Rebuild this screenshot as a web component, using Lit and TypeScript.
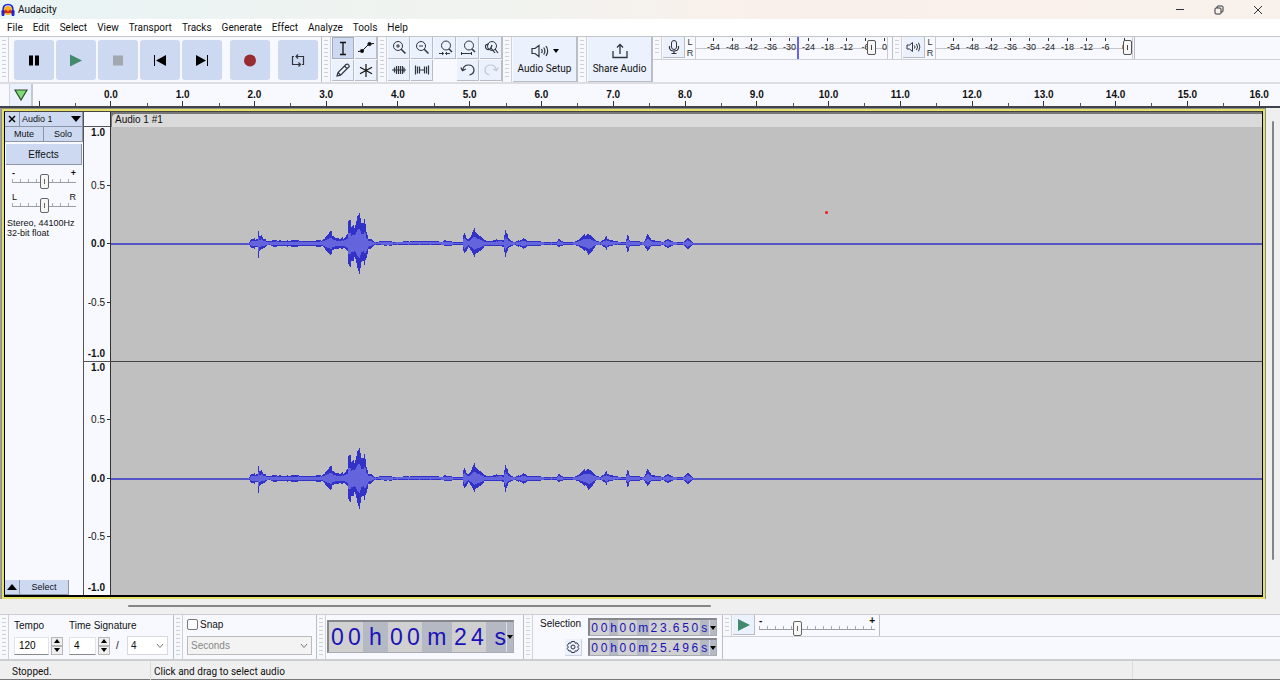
import { LitElement, html, svg, css } from "lit";
import { customElement } from "lit/decorators.js";

/* Peak envelope of the recording: [position, peak above, peak below]. */
const ENVELOPE: [number, number, number][] = [
  [137, 0, 0], [138, 1, 1], [140, 4, 4], [144, 4, 4], [146, 5, 4], [147, 13, 16], [148, 7, 7],
  [150, 8, 5], [152, 4, 4], [155, 3, 2], [158, 2, 1], [163, 3, 3], [168, 3, 2], [174, 2, 2],
  [180, 3, 3], [188, 3, 2], [196, 2, 2], [203, 2, 2], [206, 3, 3], [210, 3, 2], [213, 5, 5],
  [216, 8, 8], [219, 11, 10], [222, 8, 7], [225, 5, 5], [229, 4, 4], [233, 6, 5], [236, 10, 8],
  [237, 23, 21], [239, 22, 22], [240, 15, 16], [242, 16, 15], [244, 22, 18], [246, 30, 27],
  [248, 31, 31], [250, 19, 17], [252, 18, 15], [254, 24, 21], [255, 13, 17], [257, 5, 6],
  [260, 4, 4], [263, 1, 1], [266, 1, 1], [268, 2, 1], [280, 2, 2], [282, 1, 1], [300, 2, 1],
  [324, 2, 1], [330, 1, 1], [333, 3, 2], [338, 2, 2], [342, 1, 1], [351, 1, 1], [353, 13, 12],
  [355, 6, 8], [357, 4, 3], [359, 6, 6], [361, 10, 8], [364, 14, 13], [366, 10, 10], [370, 6, 6],
  [373, 3, 2], [380, 2, 2], [388, 4, 2], [392, 3, 3], [394, 12, 12], [395, 9, 8], [397, 6, 5],
  [400, 2, 2], [404, 1, 1], [408, 3, 3], [412, 5, 5], [416, 2, 2], [424, 2, 2], [434, 1, 1],
  [445, 1, 1], [447, 4, 3], [452, 1, 1], [462, 1, 1], [468, 4, 3], [473, 8, 6], [475, 10, 9],
  [477, 10, 12], [480, 7, 8], [484, 3, 2], [489, 1, 1], [493, 4, 3], [495, 6, 5], [499, 3, 2],
  [504, 2, 1], [511, 1, 1], [514, 1, 1], [516, 7, 7], [519, 3, 3], [524, 2, 2], [530, 1, 1],
  [533, 2, 2], [536, 9, 7], [539, 4, 3], [546, 2, 2], [551, 1, 1], [556, 4, 4], [560, 2, 2],
  [566, 1, 1], [572, 1, 1], [576, 6, 6], [579, 3, 3], [582, 0, 0],
];

const WIDTH = 1151;
const MIDDLE = 116;

function wavePath(scale: number, roughness: number): string {
  const top: string[] = [];
  const bottom: string[] = [];
  let seg = 0;
  for (let x = ENVELOPE[0][0]; x < ENVELOPE[ENVELOPE.length - 1][0]; x++) {
    while (seg < ENVELOPE.length - 2 && ENVELOPE[seg + 1][0] <= x) seg++;
    const [x0, a0, b0] = ENVELOPE[seg];
    const [x1, a1, b1] = ENVELOPE[seg + 1];
    const t = (x - x0) / (x1 - x0);
    const jitter = 1 - roughness * ((x * 7919) % 11) / 11;
    const up = Math.round((a0 + (a1 - a0) * t) * scale * jitter);
    const down = Math.round((b0 + (b1 - b0) * t) * scale * jitter);
    top.push(`L${x} ${MIDDLE - up}H${x + 1}`);
    bottom.unshift(`L${x + 1} ${MIDDLE + 1 + down}H${x}`);
  }
  return `M${ENVELOPE[0][0]} ${MIDDLE}${top.join("")}${bottom.join("")}Z`;
}

const PEAK = wavePath(1.15, 0.35);
const RMS = wavePath(0.5, 0.2);

const icon = (w: number, h: number, body: unknown) =>
  html`<svg width=${w} height=${h} viewBox="0 0 ${w} ${h}" fill="none" stroke="#30343c" aria-hidden="true">${body}</svg>`;

const lens = svg`<circle cx="7" cy="6" r="4.5"/><path d="M10.2 9.2L14.5 13.5" stroke-width="1.5"/>`;

const ICONS = {
  pause: icon(40, 40, svg`<path d="M15 15.5h4v10h-4zM21 15.5h4v10h-4z" fill="#000" stroke="none"/>`),
  play: icon(40, 40, svg`<path d="M14 14.5L26 20.5L14 26.5Z" fill="#438a6c" stroke="none"/>`),
  stop: icon(40, 40, svg`<path d="M15 15.5h10v10h-10z" fill="#a3a7b0" stroke="none"/>`),
  start: icon(40, 40, svg`<path d="M14.5 15v11" stroke="#000"/><path d="M26 15V26L16 20.5Z" fill="#000" stroke="none"/>`),
  end: icon(40, 40, svg`<path d="M25.5 15v11" stroke="#000"/><path d="M14 15V26L24 20.5Z" fill="#000" stroke="none"/>`),
  record: icon(40, 40, svg`<circle cx="20" cy="20.5" r="6" fill="#982c30" stroke="none"/>`),
  loop: icon(40, 40, svg`<path d="M16 16.5H14.5V24.5H22.5M20.500 22.500L22.500 24.500L20.500 26.500M24 24.500H25.500V16.500H18M20 14.500L18 16.500L20 18.500" stroke-width="1.200"/>`),
  ibeam: icon(22, 21, svg`<path d="M8 4.5H14M11 4.5V16.5M8 16.5H14" stroke-width="1.3" stroke="#111"/>`),
  envelope: icon(22, 21, svg`<path d="M3 14.5L7 14L14 7L19 6.5" stroke="#111"/><circle cx="7" cy="14" r="1.7" fill="#000"/><circle cx="14.5" cy="7" r="1.7" fill="#000"/>`),
  pencil: icon(22, 21, svg`<path d="M5 16L6 12.5L14 4.5Q15.5 3.5 16.7 5T16.5 7.3L8.5 15.2ZM6 12.5L8.5 15.2M12.5 6L15 8.5" stroke-width="1.2"/>`),
  multi: icon(22, 21, svg`<path d="M11 4V17M5 7.3L17 13.7M17 7.3L5 13.7" stroke-width="1.2" stroke="#111"/>`),
  zoomIn: icon(16, 16, svg`${lens}<path d="M5 6H9M7 4V8"/>`),
  zoomOut: icon(16, 16, svg`${lens}<path d="M5 6H9"/>`),
  fitSel: icon(16, 16, svg`<circle cx="9" cy="5.5" r="4.5"/><path d="M12 9L15 12" stroke-width="1.5"/><path d="M2 13.5H6.5M8.5 13.5H13M5 12L6.7 13.5L5 15M10 12L8.5 13.5L10 15"/>`),
  fitAll: icon(16, 16, svg`<circle cx="9" cy="5.5" r="4.5"/><path d="M12 9L15 12" stroke-width="1.5"/><path d="M1.5 13.5H11.5M1.5 12V15M11.5 12V15"/>`),
  zoomToggle: icon(16, 16, svg`<circle cx="9" cy="6" r="4.5"/><path d="M12 9L15 13M6 4Q2 4 2.5 7Q3 10 6 9.5Q8 9 9 5M8 8L12 13" stroke-width="1.2"/>`),
  trim: icon(16, 16, svg`<path d="M1 8H15M3.5 5.5V10.5M5.5 4V12M7.500 4V12M9.500 4V12M11.500 4V12M13 5.500V10.500" stroke-width="1.200"/>`),
  silence: icon(16, 16, svg`<path d="M1.5 3.5V12.5M3.500 4.500V11.500M5.500 4.500V11.500M5.500 8H10.500M10.500 4.500V11.500M12.500 4.500V11.500M14.500 3.500V12.500" stroke-width="1.200"/>`),
  undo: icon(16, 16, svg`<path d="M2.5 8.5Q3.5 3 8.5 3T14 8Q14 12 9.5 13M.8 5.5L2.5 8.7L5.8 7" stroke-width="1.2"/>`),
  redo: icon(16, 16, svg`<path d="M13.5 8.5Q12.5 3 7.5 3T2 8Q2 12 6.5 13M15.2 5.5L13.5 8.7L10.2 7" stroke="#c3c8d2" stroke-width="1.2"/>`),
  speaker: icon(18, 14, svg`<path d="M1 4.5H4L8 1.5V12.5L4 9.5H1ZM10.5 5Q11.8 7 10.5 9M12.7 3.5Q15 7 12.7 10.5M15 2Q18.3 7 15 12" stroke-width="1.2"/>`),
  smallSpeaker: icon(15, 12, svg`<path d="M1 4H3.5L6.5 1.5V10.5L3.5 8H1ZM8.5 4.5Q9.5 6 8.5 7.5M10.5 3Q12.5 6 10.5 9M12.5 1.7Q15.3 6 12.5 10.3"/>`),
  share: icon(16, 16, svg`<path d="M1 8V14.5H15V8M8 11V1.5M5 4.5L8 1.5L11 4.5" stroke-width="1.3"/>`),
  mic: icon(12, 16, svg`<rect x="3.5" y="1.5" width="5" height="9" rx="2.5"/><path d="M1.5 7V9Q2 12 6 12T10.5 9V7M6 12V14.5M3.5 14.5H8.5" stroke-width="1.2"/>`),
  pin: icon(14, 12, svg`<path d="M1 1H13L7 11Z" fill="#7fdc74" stroke="#2c4a2a" stroke-width="1.2"/>`),
  gear: icon(14, 14, svg`<path d="M5.5 1.5H8.5L9.2 3.2L11 2.9L12.8 5.5L11.6 7L12.8 8.5L11 11.1L9.2 10.8L8.5 12.5H5.5L4.8 10.8L3 11.1L1.2 8.5L2.4 7L1.2 5.5L3 2.9L4.8 3.2Z"/><circle cx="7" cy="7" r="2"/>`),
  smallPlay: icon(14, 14, svg`<path d="M1 1L13 7L1 13Z" fill="#438a6c" stroke="none"/>`),
  close: icon(8, 8, svg`<path d="M1 1L7 7M7 1L1 7" stroke="#000" stroke-width="1.5"/>`),
  down: icon(10, 6, svg`<path d="M0 0H10L5 6Z" fill="#000" stroke="none"/>`),
  up: icon(10, 6, svg`<path d="M0 6H10L5 0Z" fill="#000" stroke="none"/>`),
  tinyDown: icon(6, 4, svg`<path d="M0 0H6L3 4Z" fill="#000" stroke="none"/>`),
  tinyUp: icon(6, 4, svg`<path d="M0 4H6L3 0Z" fill="#000" stroke="none"/>`),
  chevron: icon(8, 6, svg`<path d="M1 1L4 4.5L7 1" stroke="#777"/>`),
  logo: icon(14, 14, svg`<circle cx="7" cy="7.5" r="4.5" fill="#ffb020" stroke="none"/><path d="M3 8L5 6.5L7 8.5L9 6.5L11 8V10H3Z" fill="#e02810" stroke="none"/><path d="M2 9V7Q2 1.5 7 1.5T12 7V9" stroke="#1a22d8" stroke-width="1.5"/><rect x=".5" y="7" width="3" height="6" rx="1.2" fill="#1a22d8" stroke="none"/><rect x="10.5" y="7" width="3" height="6" rx="1.2" fill="#1a22d8" stroke="none"/>`),
};

const MENU = ["File", "Edit", "Select", "View", "Transport", "Tracks", "Generate", "Effect", "Analyze", "Tools", "Help"];
const DECIBELS = ["-54", "-48", "-42", "-36", "-30", "-24", "-18", "-12", "-6", "0"];

@customElement("time-display")
class TimeDisplay extends LitElement {
  static properties = { value: {}, label: {} };
  declare value: string;
  declare label: string;

  static styles = css`
    :host { display: flex; box-sizing: border-box; border: 1px solid #a8abb2; border-top: 2px solid #85878c; border-left: 2px solid #85878c;
      background: #d0d0d0; color: #1a12b8; font: 12px "Liberation Sans", Arial, sans-serif; height: 18px; }
    :host([large]) { height: 33px; font-size: 23px; }
    .cell { display: flex; align-items: center; justify-content: center; flex: 10 0 0; }
    .h, .m, .s { background: #b4b9c4; }
    .h { flex-grow: 10; }
    .m { flex-grow: 13; }
    .dot { flex-grow: 3; }
    :host([large]) .h { flex-grow: 15; }
    :host([large]) .m { flex-grow: 18; }
    :host([large]) .s { flex-grow: 12; justify-content: flex-end; }
    button { width: 7px; padding: 0; border: 0; border-left: 1px solid #dde; background: #b4b9c4; display: flex; align-items: center; justify-content: center; }
    svg { flex: none; }
  `;

  render() {
    const kind = (c: string) => (c === "." ? "dot" : /[hms]/.test(c) ? c : "digit");
    return html`${[...this.value].map((c) => html`<span class="cell ${kind(c)}">${c}</span>`)}
      <button aria-label=${this.label}>${ICONS.tinyDown}</button>`;
  }
}

@customElement("level-meter")
class LevelMeter extends LitElement {
  static properties = { level: { type: Number }, label: {}, cursor: { type: Number } };
  declare level: number;
  declare label: string;
  declare cursor: number;

  static styles = css`
    :host { display: flex; height: 22px; min-width: 0; font: 9px/11px "Liberation Sans", Arial, sans-serif; color: #222; }
    .channels { display: flex; flex: none; flex-direction: column; width: 10px; text-align: center; color: #333; }
    .scale { flex: 1; min-width: 0; position: relative; border-left: 1px solid #c8cad0; border-right: 1px solid #c8cad0; }
    .labels { display: flex; padding: 0 0 0 8px; height: 22px; background: linear-gradient(#c4c6cc, #c4c6cc) 0 11px / 100% 1px no-repeat; }
    .db { flex: 0 0 19px; padding-top: 5px; text-align: center; background: linear-gradient(#333, #333) 50% 1px / 1px 3px no-repeat; }
    .cursor { position: absolute; top: 0; bottom: 0; width: 2px; background: #6464f0; }
    input { position: absolute; inset: 0; width: 100%; height: 21px; margin: 0; appearance: none; background: none; }
    input::-webkit-slider-thumb { appearance: none; box-sizing: border-box; width: 9px; height: 15px; border: 1px solid #555; border-radius: 2px;
      background: linear-gradient(#444, #444) 50% 50% / 1px 5px no-repeat, #f6f6f6; }
  `;

  render() {
    return html`<div class="channels"><span>L</span><span>R</span></div>
      <div class="scale">
        <div class="labels">${DECIBELS.map((d) => html`<span class="db">${d}</span>`)}</div>
        ${this.cursor ? html`<div class="cursor" style="left:${this.cursor}%"></div>` : ""}
        <input type="range" min="0" max="100" .value=${String(this.level)} aria-label=${this.label}>
      </div>`;
  }
}

@customElement("app-root")
class AppRoot extends LitElement {
  static styles = css`
    :host { display: flex; flex-direction: column; height: 100vh; overflow: hidden; background: #efefef; color: #111;
      font: 10px "Liberation Sans", Arial, sans-serif; }
    * { box-sizing: border-box; }
    button { font: inherit; color: inherit; padding: 0; border: 0; background: none; display: flex; align-items: center; justify-content: center; }
    svg { display: block; flex: none; }
    .ui { font-family: Roboto, "Noto Sans", sans-serif; font-size: 10px; }

    .title { display: flex; flex: none; align-items: center; height: 19px; padding-left: 1px; gap: 3px; background: linear-gradient(90deg, #e9f4f5, #f1f3ef 40%, #faf0eb 60%, #f8f1ec); }
    .title h1 { flex: 1; margin: 0; font-size: 10px; font-weight: 400; }
    .window { width: 36px; height: 19px; }
    .title .window:last-child { margin-right: 4px; }
    .menu { display: flex; flex: none; height: 17px; align-items: center; background: #fff; padding-left: 7px; gap: 10px; }

    .toolbars { display: flex; flex: none; height: 48px; border-top: 1px solid #c4c5ca; border-bottom: 2px solid #dcdde1; background: #f8f9ff; }
    .dock { display: flex; border-right: 1px solid #bcbec6; }
    .grip { width: 9px; flex: none; border-right: 1px solid #d0d2d8;
      background: repeating-linear-gradient(#cfd1d8 0 1px, transparent 1px 4px) 2px 3px / 4px calc(100% - 6px) no-repeat #f7f8fb; }
    .transport { display: flex; gap: 2px; padding: 0 3px 0 5px; align-items: center; }
    .transport button { width: 40px; height: 40px; border-radius: 3px; background: #ccd9f1; }
    .transport .apart { margin-left: 6px; }
    .tools { display: grid; grid-template-columns: repeat(2, 23px); grid-template-rows: 23px 22px; }
    .edit { display: grid; grid-template-columns: repeat(5, 23px); grid-template-rows: 23px 22px; }
    .tool { flex: none; background: #ebf1fd; border-right: 1px solid #b8bdc8; border-bottom: 1px solid #b8bdc8; margin: 0 0 1px 1px; }
    .tool.on { background: #ccd9f1; border: 1px solid #a4adc0; }
    .big { width: 64px; margin-left: 1px; flex-direction: column; gap: 2px; background: #ebf1fd; border-right: 1px solid #b8bdc8; border-bottom: 1px solid #b8bdc8; padding-bottom: 3px; }
    .big .row { display: flex; align-items: center; gap: 4px; height: 20px; }
    .meters { flex: 1; }
    .meter-row { display: flex; height: 23px; border-bottom: 1px solid #cfd1d6; }
    .meter-row .tool, .speed-row .tool { width: 22px; }
    .rec { width: 240px; }
    .out { width: 242px; }
    level-meter { flex: 1; margin-right: 4px; }
    .out level-meter { margin-right: 1px; }

    .ruler { display: flex; flex: none; height: 24px; background: #f8f9ff; border-bottom: 2px solid #3f444c; overflow: hidden; font-weight: 700; }
    .ruler-head { flex: 0 0 75px; display: flex; padding-left: 9px; background: linear-gradient(#333, #333) 39px 100% / 1px 5px no-repeat; }
    .pin { width: 24px; height: 22px; background: #ebf1fd; border-right: 2px solid #c2c8d4; border-left: 1px solid #d0d4dc; }
    .times { flex: 1; display: flex; min-width: 0; }
    .second { flex: 0 0 calc(100% / 1679 * 100); text-align: center; line-height: 22px;
      background: linear-gradient(#333, #333) 50% 100% / 1px 5px no-repeat, linear-gradient(#555, #555) 0 100% / 1px 3px no-repeat; }

    .project { flex: 1; display: flex; min-height: 0; overflow: hidden; padding-left: 2px; background: linear-gradient(90deg, #a0a0a0 2px, #efefef 2px); }
    .frame { flex: 1; display: flex; min-width: 0; margin-top: 1px; border: 2px solid #e4e06a; outline: 1px solid #8f8f88; }
    .track { flex: 1; display: flex; min-width: 0; border: 1px solid #000; border-top: 1px solid #444; border-bottom-width: 2px; }
    .panel { width: 79px; flex: none; display: flex; flex-direction: column; background: #f8f9ff; border-right: 1px solid #555; font-size: 9px; }
    .blue { background: #ccd9f1; border-right: 1px solid #8d95a8; border-bottom: 1px solid #8d95a8; }
    .panel-title { display: flex; height: 15px; }
    .panel-title .x { width: 15px; }
    .panel-title .name { flex: 1; justify-content: space-between; padding: 0 1px 0 2px; }
    .pair { display: grid; grid-template-columns: 1fr 1fr; height: 15px; }
    .effects { height: 21px; margin: 2px 1px 3px; font-size: 10px; }
    .fader { display: grid; grid-template-columns: 1fr 1fr; width: 64px; margin-left: 7px; height: 24px; line-height: 10px; font-weight: 700; }
    .fader :nth-child(2) { text-align: right; }
    .fader.thin { font-weight: 400; }
    .slider { grid-column: 1 / 3; width: 100%; height: 16px; margin: -8px 0 0; appearance: none;
      background: linear-gradient(#9a9da4, #9a9da4) 0 9px / 100% 1px no-repeat,
        repeating-linear-gradient(90deg, #a8abb2 0 1px, transparent 1px 8px) 0 6px / 100% 3px no-repeat; }
    .slider::-webkit-slider-thumb { appearance: none; width: 9px; height: 15px; border: 1px solid #666; border-radius: 2px;
      background: linear-gradient(#666, #666) 50% 50% / 1px 5px no-repeat, #f6f6f6; }
    .info { margin: 2px 0 0 2px; line-height: 10px; white-space: nowrap; }
    .panel-foot { display: flex; height: 15px; margin-top: auto; }
    .panel-foot .fold { width: 15px; }
    .panel-foot .pick { width: 49px; }

    .levels { width: 27px; flex: none; display: flex; flex-direction: column; background: #f8f9ff; border-right: 1px solid #333; padding-top: 14px; }
    .level-scale { flex: 1; display: grid; grid-template-rows: 1fr 2fr 2fr 2fr 1fr; text-align: right; border-top: 1px solid #555; }
    .level-scale span { display: flex; align-items: center; justify-content: flex-end; padding-right: 5px;
      background: linear-gradient(#333, #333) 100% 50% / 3px 1px no-repeat; }
    .level-scale .edge { align-items: flex-start; font-weight: 700; background: none; }
    .level-scale .edge:last-child { align-items: flex-end; padding-bottom: 2px; }
    .level-scale .zero { font-weight: 700; }

    .clip { flex: 1; min-width: 0; display: flex; flex-direction: column; position: relative; background: #777; }
    .clip-title { height: 14px; margin-top: 1px; padding-left: 3px; line-height: 12px; border: 1px solid #777; border-bottom: 0; border-right: 0; border-radius: 5px 0 0 0; background: #dadada; }
    .channel { flex: 1; min-height: 0; width: 100%; background: #c0c0c0; }
    .channel + .channel { border-top: 1px solid #444; }
    .marker { position: absolute; left: 62%; top: 20.5%; width: 3px; height: 3px; border-radius: 2px; background: #f01818; }
    .vscroll { width: 15px; flex: none; padding: 13px 0 39px 7px; }
    .vscroll div, .hscroll div { background: #858585; border-radius: 1px; }
    .vscroll div { width: 2px; height: 100%; }
    .hscroll { flex: none; height: 15px; padding: 6px 0 0 10%; }
    .hscroll div { width: 50.6%; height: 2px; }

    .bottom { display: flex; flex: none; height: 47px; background: #f8f9ff; border-top: 1px solid #cdced2; border-bottom: 2px solid #cdced2; }
    .tempo { display: grid; grid-template-columns: 49px 41px 5px 41px; column-gap: 6px; grid-template-rows: 21px 19px; align-items: center; padding: 0 5px; }
    .tempo .sig { grid-column: 2 / 5; }
    .num { display: flex; gap: 2px; height: 18px; }
    input[type="number"] { flex: 1; min-width: 0; height: 18px; padding: 0 0 0 4px; border: 1px solid #e2e3e8; border-bottom: 1px solid #888; background: #fff; font: inherit; appearance: textfield; }
    input::-webkit-inner-spin-button { display: none; }
    .spin { display: grid; grid-template-rows: 9px 9px; }
    .spin button { width: 12px; background: #efefef; border: 1px solid #b8b8b8; }
    .select { position: relative; display: flex; align-items: center; }
    .select svg { position: absolute; right: 4px; }
    select { appearance: none; width: 100%; height: 19px; padding: 0 0 0 3px; border: 1px solid #d8d9de; border-radius: 0; background: #fff; font: inherit; color: #111; }
    select:disabled { color: #888; border-color: #bbb; background: #f3f3f3; opacity: 1; }
    .snap { width: 133px; padding: 1px 4px 0; }
    .snap label { display: flex; align-items: center; gap: 2px; height: 17px; margin-bottom: 3px; }
    .snap input { appearance: none; width: 11px; height: 11px; margin: 0; border: 1px solid #777; border-radius: 2px; background: #fdfdfd; }
    .position { padding: 5px 9px 0 1px; }
    .position time-display { width: 187px; }
    .selection { display: grid; grid-template-columns: 48px 129px; grid-template-rows: 20px 20px; align-items: center; padding: 2px 5px 0 7px; }
    .selection > span { line-height: 10px; padding-bottom: 6px; }
    .selection .gear { justify-self: end; margin-right: 6px; width: 17px; height: 17px; background: #ebf1fd; border-right: 1px solid #ccd2de; border-bottom: 1px solid #ccd2de; }
    .rest { flex: 1; }
    .speed-row { display: flex; height: 22px; border-bottom: 1px solid #cfd1d6; }
    .speed { width: 116px; margin: 1px 4px 0; height: 20px; }
    .speed .slider { margin-top: -6px; }

    .status { display: flex; flex: none; height: 19px; align-items: center; border-bottom: 1px solid #777; }
    .state { width: 151px; padding: 2px 0 0 12px; line-height: 17px; border-right: 1px solid #dcdcdc; }
    .hint { flex: 1; padding: 2px 0 0 3px; line-height: 17px; }
    .last { width: 148px; height: 18px; border-left: 1px solid #dcdcdc; }
  `;

  private channel(name: string) {
    return html`<svg class="channel" viewBox="0 0 ${WIDTH} 233" preserveAspectRatio="none" shape-rendering="crispEdges" role="img" aria-label=${name}>
      <path d="M0 ${MIDDLE}H${WIDTH}V${MIDDLE + 1.5}H0Z" fill="#3232c8" shape-rendering="auto"/>
      <path d=${PEAK} fill="#3232c8"/>
      <path d=${RMS} fill="#6464dc"/>
    </svg>`;
  }

  private tool(name: string, picture: unknown, on = false) {
    return html`<button class="tool ${on ? "on" : ""}" aria-label=${name}>${picture}</button>`;
  }

  private levelScale() {
    return html`<div class="level-scale"><span class="edge">1.0</span><span>0.5</span><span class="zero">0.0</span><span>-0.5</span><span class="edge">-1.0</span></div>`;
  }

  private spinner(label: string, value: number) {
    return html`<div class="num"><input type="number" aria-label=${label} .value=${String(value)}>
      <div class="spin"><button aria-label="${label} up">${ICONS.tinyUp}</button><button aria-label="${label} down">${ICONS.tinyDown}</button></div></div>`;
  }

  render() {
    return html`
      <header class="title ui">
        ${ICONS.logo}<h1>Audacity</h1>
        <button class="window" aria-label="Minimize">${icon(10, 10, svg`<path d="M1 4.5H9"/>`)}</button>
        <button class="window" aria-label="Restore">${icon(10, 10, svg`<rect x="1" y="3" width="6" height="6" rx="1"/><path d="M3 3V2Q3 1 4 1H8Q9 1 9 2V6Q9 7 8 7H7"/>`)}</button>
        <button class="window" aria-label="Close">${icon(10, 10, svg`<path d="M1 1L9 9M9 1L1 9"/>`)}</button>
      </header>
      <nav class="menu ui">${MENU.map((m) => html`<button>${m}</button>`)}</nav>

      <section class="toolbars">
        <div class="dock"><div class="grip"></div>
          <div class="transport">
            <button aria-label="Pause">${ICONS.pause}</button><button aria-label="Play">${ICONS.play}</button>
            <button aria-label="Stop">${ICONS.stop}</button><button aria-label="Skip to start">${ICONS.start}</button>
            <button aria-label="Skip to end">${ICONS.end}</button><button class="apart" aria-label="Record">${ICONS.record}</button>
            <button class="apart" aria-label="Loop">${ICONS.loop}</button>
          </div>
        </div>
        <div class="dock"><div class="grip"></div>
          <div class="tools">
            ${this.tool("Selection tool", ICONS.ibeam, true)}${this.tool("Envelope tool", ICONS.envelope)}
            ${this.tool("Draw tool", ICONS.pencil)}${this.tool("Multi-tool", ICONS.multi)}
          </div>
        </div>
        <div class="dock"><div class="grip"></div>
          <div class="edit">
            ${this.tool("Zoom in", ICONS.zoomIn)}${this.tool("Zoom out", ICONS.zoomOut)}${this.tool("Fit selection", ICONS.fitSel)}
            ${this.tool("Fit project", ICONS.fitAll)}${this.tool("Zoom toggle", ICONS.zoomToggle)}
            ${this.tool("Trim", ICONS.trim)}${this.tool("Silence", ICONS.silence)}<span></span>
            ${this.tool("Undo", ICONS.undo)}${this.tool("Redo", ICONS.redo)}
          </div>
        </div>
        <div class="dock"><div class="grip"></div>
          <button class="big ui"><span class="row">${ICONS.speaker}${ICONS.tinyDown}</span>Audio Setup</button>
        </div>
        <div class="dock"><div class="grip"></div>
          <button class="big ui"><span class="row">${ICONS.share}</span>Share Audio</button>
        </div>
        <div class="meters"><div class="meter-row">
          <div class="dock rec"><div class="grip"></div>${this.tool("Record meter", ICONS.mic)}
            <level-meter level="94" cursor="53" label="Recording level"></level-meter></div>
          <div class="dock out"><div class="grip"></div>${this.tool("Playback meter", ICONS.smallSpeaker)}
            <level-meter level="100" label="Playback level"></level-meter></div>
        </div></div>
      </section>

      <section class="ruler">
        <div class="ruler-head"><button class="pin" aria-label="Pinned play head">${ICONS.pin}</button></div>
        <div class="times">${Array.from({ length: 17 }, (_, i) => html`<span class="second">${i}.0</span>`)}</div>
      </section>

      <main class="project">
        <div class="frame"><div class="track">
          <div class="panel">
            <div class="panel-title"><button class="x blue" aria-label="Close track">${ICONS.close}</button>
              <button class="name blue">Audio 1${ICONS.down}</button></div>
            <div class="pair"><button class="blue">Mute</button><button class="blue">Solo</button></div>
            <button class="effects blue">Effects</button>
            <div class="fader"><span>-</span><span>+</span><input class="slider" type="range" value="50" aria-label="Gain"></div>
            <div class="fader thin"><span>L</span><span>R</span><input class="slider" type="range" value="50" aria-label="Pan"></div>
            <div class="info">Stereo, 44100Hz<br>32-bit float</div>
            <div class="panel-foot"><button class="fold blue" aria-label="Collapse">${ICONS.up}</button><button class="pick blue">Select</button></div>
          </div>
          <div class="levels">${this.levelScale()}${this.levelScale()}</div>
          <div class="clip">
            <div class="clip-title">Audio 1 #1</div>
            ${this.channel("Left channel")}${this.channel("Right channel")}
            <span class="marker"></span>
          </div>
        </div></div>
        <div class="vscroll"><div></div></div>
      </main>
      <div class="hscroll"><div></div></div>

      <section class="bottom">
        <div class="dock"><div class="grip"></div>
          <div class="tempo"><span>Tempo</span><span class="sig">Time Signature</span>
            ${this.spinner("Tempo", 120)}${this.spinner("Beats", 4)}<span>/</span>
            <div class="select"><select aria-label="Beat unit"><option>4</option></select>${ICONS.chevron}</div>
          </div>
        </div>
        <div class="dock"><div class="grip"></div>
          <div class="snap"><label><input type="checkbox">Snap</label>
            <div class="select"><select disabled aria-label="Snap to"><option>Seconds</option></select>${ICONS.chevron}</div></div>
        </div>
        <div class="dock"><div class="grip"></div>
          <div class="position"><time-display large value="00h00m24s" label="Time format"></time-display></div>
        </div>
        <div class="dock"><div class="grip"></div>
          <div class="selection"><span>Selection</span><time-display value="00h00m23.650s" label="Start format"></time-display>
            <button class="gear" aria-label="Selection options">${ICONS.gear}</button><time-display value="00h00m25.496s" label="End format"></time-display></div>
        </div>
        <div class="rest"><div class="speed-row">
          <div class="dock"><div class="grip"></div>${this.tool("Play at speed", ICONS.smallPlay)}
            <div class="fader speed"><span>-</span><span>+</span><input class="slider" type="range" value="32" aria-label="Speed"></div></div>
        </div></div>
      </section>

      <footer class="status ui"><span class="state">Stopped.</span><span class="hint">Click and drag to select audio</span><span class="last"></span></footer>
    `;
  }
}
